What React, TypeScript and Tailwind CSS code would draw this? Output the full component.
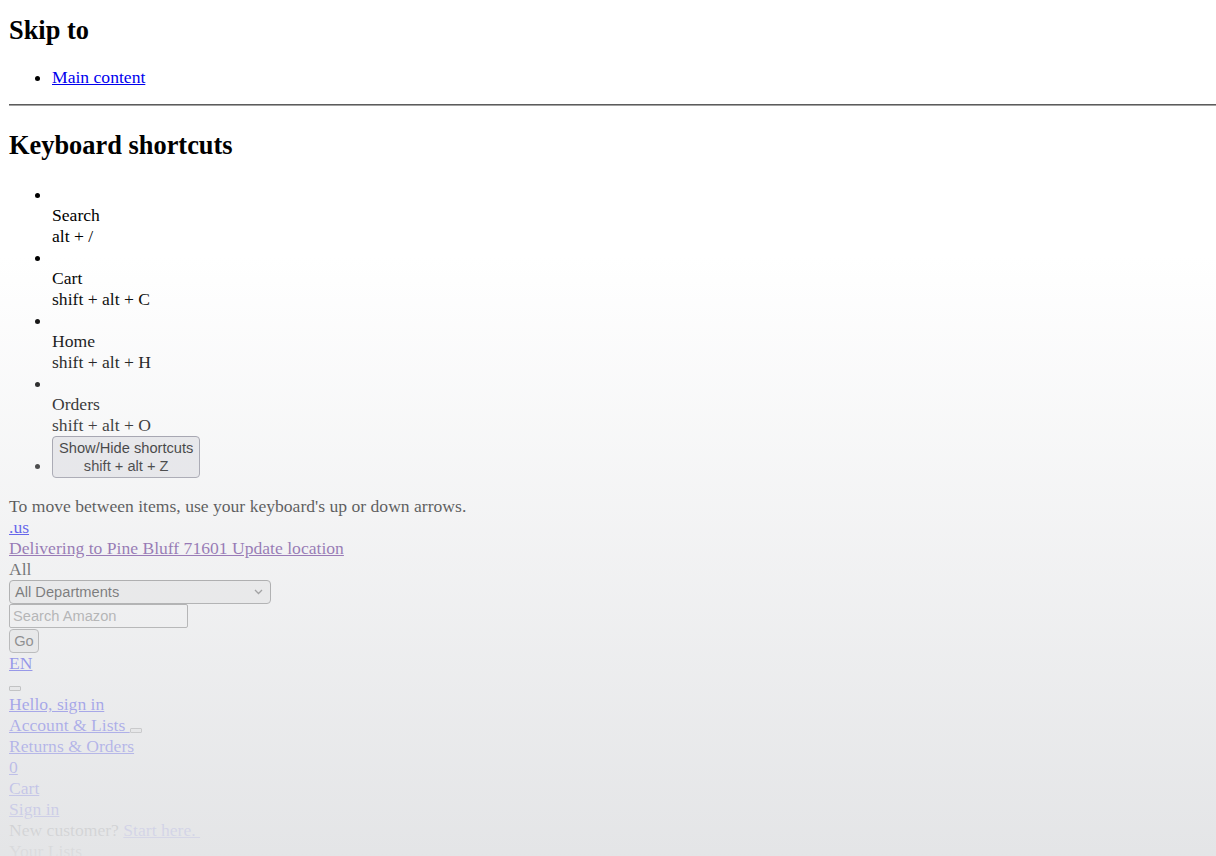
import React from "react";

const serif = "font-['Liberation_Serif','Times_New_Roman',serif]";
const sans = "font-['Liberation_Sans',Arial,sans-serif]";

function MiniButton({ className = "" }: { className?: string }) {
  return (
    <span
      className={
        "inline-block w-[12px] h-[5px] border border-[#767676] bg-[#efefef] rounded-[1px] " +
        className
      }
    />
  );
}

export default function App() {
  const shortcuts = [
    { label: "Search", keys: "alt + /" },
    { label: "Cart", keys: "shift + alt + C" },
    { label: "Home", keys: "shift + alt + H" },
    { label: "Orders", keys: "shift + alt + O" },
  ];

  return (
    <div
      className={`relative h-[856px] overflow-hidden bg-white text-black text-[17.6px] leading-[21px] ${serif}`}
    >
      <div className="pl-[9px]">
        <h2 className="mt-[15px] mb-[21px] text-[26.4px] leading-[31px] font-bold">
          Skip to
        </h2>
        <ul className="list-disc pl-[43px] mb-[16px]">
          <li>
            <a href="#" className="text-[#0000ee] underline">
              Main content
            </a>
          </li>
        </ul>
        <div className="h-[2px] border-t border-t-[#5c5c5c] border-b border-b-[#a2a2a2]" />
        <h2 className="mt-[24px] mb-[23px] text-[26.4px] leading-[31px] font-bold">
          Keyboard shortcuts
        </h2>
        <ul className="list-disc pl-[43px] mb-[18px]">
          {shortcuts.map((s) => (
            <li key={s.label}>
              <div>{"\u200b"}</div>
              <div>{s.label}</div>
              <div>{s.keys}</div>
            </li>
          ))}
          <li>
            <span
              className={`inline-block px-[6px] py-[2px] border border-[#8f8f9d] rounded-[4px] bg-[#e9e9ed] text-center text-[14.67px] leading-[18px] ${sans}`}
            >
              <div>Show/Hide shortcuts</div>
              <div>shift + alt + Z</div>
            </span>
          </li>
        </ul>
        <div>To move between items, use your keyboard's up or down arrows.</div>
        <div>
          <a href="#" className="text-[#0000ee] underline">
            .us
          </a>
        </div>
        <div>
          <a href="#" className="text-[#551a8b] underline">
            Delivering to Pine Bluff 71601 Update location
          </a>
        </div>
        <div className="h-[21px]">All</div>
        <div
          className={`flex items-center justify-between w-[262px] h-[24px] border border-[#767676] rounded-[4px] bg-[#efefef] pl-[5px] pr-[7px] text-[14.67px] text-black ${sans}`}
        >
          <span>All Departments</span>
          <svg width="9" height="6" viewBox="0 0 9 6" fill="none">
            <path d="M1 1l3.5 3.5L8 1" stroke="#555" strokeWidth="1.3" />
          </svg>
        </div>
        <div
          className={`w-[179px] h-[24px] border border-[#767676] rounded-[2px] bg-white pl-[3px] text-[14.67px] leading-[22px] text-[#757575] ${sans}`}
        >
          Search Amazon
        </div>
        <div
          className={`mt-[1px] w-[30px] h-[24px] border border-[#767676] rounded-[4px] bg-[#efefef] text-[14.67px] leading-[22px] text-center text-black ${sans}`}
        >
          Go
        </div>
        <div>
          <a href="#" className="text-[#0000ee] underline">
            EN
          </a>
        </div>
        <div className="h-[20px]">
          <MiniButton className="align-[-1px]" />
        </div>
        <div>
          <a href="#" className="text-[#0000ee] underline">
            Hello, sign in
          </a>
        </div>
        <div>
          <a href="#" className="text-[#0000ee] underline">
            {"Account & Lists "}
          </a>
          <MiniButton className="align-[-2px]" />
        </div>
        <div>
          <a href="#" className="text-[#0000ee] underline">
            Returns &amp; Orders
          </a>
        </div>
        <div>
          <a href="#" className="text-[#0000ee] underline">
            0
          </a>
        </div>
        <div>
          <a href="#" className="text-[#0000ee] underline">
            Cart
          </a>
        </div>
        <div>
          <a href="#" className="text-[#0000ee] underline">
            Sign in
          </a>
        </div>
        <div>
          New customer?{" "}
          <a href="#" className="text-[#0000ee] underline">
            {"Start here.\u00a0"}
          </a>
        </div>
        <div>Your Lists</div>
        <div>Create a List</div>
      </div>
      <div className="pointer-events-none absolute inset-0 bg-[linear-gradient(to_bottom,rgba(227,228,230,0)_30%,rgba(227,228,230,0.97)_100%)]" />
    </div>
  );
}
